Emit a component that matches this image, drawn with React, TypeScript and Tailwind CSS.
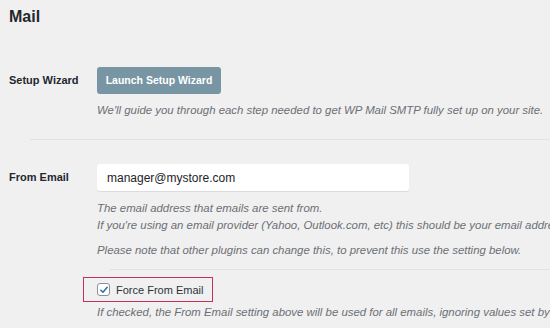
import React from 'react';

const desc = 'text-[11.4px] italic leading-[17px] text-[#6b6f74] whitespace-nowrap';
const label = 'w-[88px] shrink-0 text-[11px] font-bold text-[#23282d] leading-[27px]';

export default function App() {
  return (
    <div
      className="w-[550px] h-[328px] overflow-hidden bg-[#f0f0f1] pl-[9px]"
      style={{ fontFamily: '"Liberation Sans", Arial, sans-serif' }}
    >
      <h2 className="mt-[7px] text-[16px] font-bold leading-[20px] text-[#23282d]">Mail</h2>

      {/* Setup Wizard */}
      <div className="mt-[40px] flex">
        <div className={label}>Setup Wizard</div>
        <div>
          <button className="h-[27px] w-[124px] rounded-[3px] bg-[#7895a4] text-[10.5px] font-bold text-white">
            Launch Setup Wizard
          </button>
          <p className={`${desc} mt-[8px]`}>
            We'll guide you through each step needed to get WP Mail SMTP fully set up on your site.
          </p>
        </div>
      </div>

      <div className="mt-[20px] ml-[21px] h-px bg-[#e2e2e3]" />

      {/* From Email */}
      <div className="mt-[24px] flex">
        <div className={label}>From Email</div>
        <div>
          <div className="flex h-[27px] w-[312px] items-center rounded-[3px] bg-white pl-[10px] text-[12px] text-[#1d2327] shadow-[0_1px_0_#dcdcde]">
            manager@mystore.com
          </div>
          <p className={`${desc} mt-[9px]`}>The email address that emails are sent from.</p>
          <p className={desc}>
            If you're using an email provider (Yahoo, Outlook.com, etc) this should be your email address for that provider.
          </p>
          <p className={`${desc} mt-[8px]`}>
            Please note that other plugins can change this, to prevent this use the setting below.
          </p>
          <div className="mt-[10px] ml-[13px] h-px bg-[#e2e2e3]" />
          <div className="mt-[7px] -ml-[14px] flex h-[25px] w-[130px] items-center border-[1.5px] border-[#c52f5f] pl-[13px]">
            <span className="flex h-[13px] w-[13px] items-center justify-center rounded-[3px] border border-[#8c8f94] bg-white">
              <svg viewBox="0 0 12 12" className="h-[10px] w-[10px]">
                <path d="M2.2 6.2 L4.8 8.8 L9.8 2.8" fill="none" stroke="#2271b1" strokeWidth="1.8" strokeLinecap="round" strokeLinejoin="round" />
              </svg>
            </span>
            <span className="ml-[6px] text-[11px] text-[#2c3338]">Force From Email</span>
          </div>
          <p className={`${desc} mt-[2px]`}>
            If checked, the From Email setting above will be used for all emails, ignoring values set by other plugins.
          </p>
        </div>
      </div>
    </div>
  );
}
